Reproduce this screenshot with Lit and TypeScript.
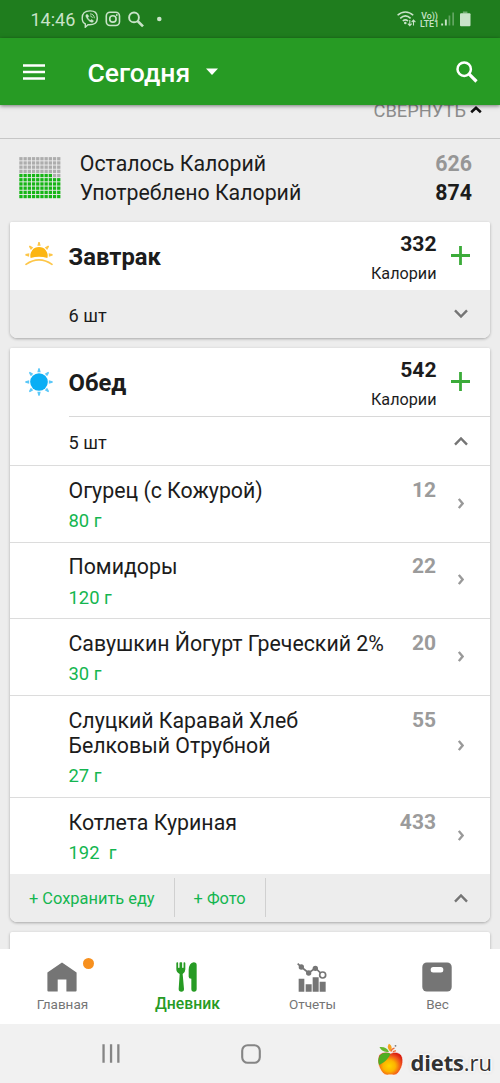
import { LitElement, html, svg, css } from "lit";
import { customElement, property } from "lit/decorators.js";
import { classMap } from "lit/directives/class-map.js";

interface Food {
  name: string;
  amount: string;
  kcal: number;
}

const FOODS: Food[] = [
  { name: "Огурец (с Кожурой)", amount: "80 г", kcal: 12 },
  { name: "Помидоры", amount: "120 г", kcal: 22 },
  { name: "Савушкин Йогурт Греческий 2%", amount: "30 г", kcal: 20 },
  { name: "Слуцкий Каравай Хлеб Белковый Отрубной", amount: "27 г", kcal: 55 },
  { name: "Котлета Куриная", amount: "192 \u00a0г", kcal: 433 },
];

const EATEN = 874;
const LEFT = 626;

const chevron = (up: boolean) => html`<svg class="chevron" width="14" height="10" viewBox="0 0 14 10" fill="none" stroke="#757575" stroke-width="2.4">
  <path d=${up ? "M1 8.6 7 2.4 13 8.6" : "M1 1.4 7 7.6 13 1.4"} />
</svg>`;

const rays = (cx: number, cy: number, angles: number[]) =>
  angles.map((a) => svg`<path transform="rotate(${a} ${cx} ${cy})" d="M${cx - 5} ${cy - 29.5}h10l-3 -11.5h-4z" />`);

const sunrise = html`<svg width="28" height="28" viewBox="75 306 84 84">
  <g fill="#fdc648">${rays(117, 347, [-86, -45, 0, 45, 86])}</g>
  <path fill="#fcb614" d="M92 354A26 26 0 1 1 142 354Q117 346 92 354z" />
  <path fill="none" stroke="#fdc648" stroke-width="5" stroke-linecap="round" d="M78 373Q117 346 156 373" />
</svg>`;

const noon = html`<svg width="28" height="28" viewBox="75 84 84 84">
  <g fill="#5cc8f8">${rays(117, 126, [0, 45, 90, 135, 180, 225, 270, 315])}</g>
  <circle cx="117" cy="126" r="26.5" fill="#0aaef5" />
</svg>`;

@customElement("calorie-grid")
class CalorieGrid extends LitElement {
  @property({ type: Number }) eaten = 0;
  @property({ type: Number }) total = 1;

  static styles = css`
    :host {
      display: block;
    }
    svg { display: block; }
    .dot { fill: #adadad; }
    .full { fill: #16b516; }
  `;

  render() {
    const filled = Math.round((this.eaten / this.total) * 100);
    return html`<svg width="42" height="42" viewBox="0 0 42 42">
      ${Array.from({ length: 100 }, (_, i) => {
        const row = Math.floor(i / 10);
        const rank = (9 - row) * 10 + (i % 10);
        return svg`<rect class=${classMap({ dot: true, full: rank < filled })} x=${(i % 10) * 4.2 + 0.3} y=${row * 4.2 + 0.1} width="3.3" height="3.3" />`;
      })}
    </svg>`;
  }
}

@customElement("meal-header")
class MealHeader extends LitElement {
  @property() name = "";
  @property({ type: Number }) kcal = 0;
  @property({ attribute: false }) icon: unknown;

  static styles = css`
    :host {
      display: grid;
      grid-template-columns: 43.5px 1fr auto 53.5px;
      align-items: center;
      height: 68px;
      padding-left: 15px;
      box-sizing: border-box;
      background: #fff;
    }
    svg { display: block; }
    .name { font-weight: 700; font-size: 23.8px; line-height: 28px; padding-top: 2px; }
    .sum { text-align: right; padding-top: 9px; }
    .kcal { font-weight: 700; font-size: 21.1px; line-height: 30px; margin-top: -4px; }
    .unit { font-size: 16.2px; line-height: 30px; }
    .plus { margin: -1px 0 0 14.5px; }
  `;

  render() {
    return html`
      ${this.icon}
      <div class="name">${this.name}</div>
      <div class="sum">
        <div class="kcal">${this.kcal}</div>
        <div class="unit">Калории</div>
      </div>
      <svg class="plus" width="19" height="19" viewBox="0 0 19 19" stroke="#3bab39" stroke-width="2.8">
        <path d="M9.5 0v19M0 9.5h19" />
      </svg>
    `;
  }
}

@customElement("app-root")
class AppRoot extends LitElement {
  static styles = css`
    :host {
      display: flex;
      flex-direction: column;
      position: relative;
      height: 100vh;
      overflow: hidden;
      background: #ededed;
      color: #1c1c1c;
      font-family: Roboto, "Liberation Sans", sans-serif;
    }
    svg { display: block; flex: none; }

    .status {
      display: flex;
      align-items: center;
      height: 38px;
      flex: none;
      padding: 0 29px 0 30.5px;
      background: #1f7d1e;
      color: #c9e3c9;
    }
    .clock { font-size: 18px; line-height: 22px; width: 50.5px; padding-top: 2px; }
    .spacer { flex: 1; }
    .volte {
      font-size: 8.8px;
      font-weight: 500;
      line-height: 8px;
      text-align: center;
      width: 19px;
      margin: 2px 2px 0 4px;
    }

    .bar {
      display: flex;
      align-items: center;
      height: 67px;
      flex: none;
      padding: 0 22.5px 0 23px;
      background: #279b24;
      color: #fff;
      box-shadow: 0 1px 4px rgba(0, 0, 0, 0.5);
      z-index: 1;
    }
    .title { font-size: 26.5px; font-weight: 500; line-height: 34px; margin: 3px 16px 0 42.5px; }

    main { flex: 1; min-height: 0; overflow: hidden; }
    .collapse {
      display: flex;
      justify-content: flex-end;
      height: 33px;
      border-bottom: 1px solid #c6c6c6;
      padding-right: 18px;
      color: #8c8c8c;
      font-size: 18.3px;
      line-height: 24px;
    }
    .collapse span { margin: -6px 4px 0 0; }
    .summary {
      display: grid;
      grid-template-columns: 61px 1fr auto;
      height: 82px;
      box-sizing: border-box;
      padding: 11px 28px 0 18.8px;
      font-size: 21.3px;
      line-height: 28.8px;
    }
    calorie-grid { margin-top: 6.5px; }
    .figures { text-align: right; font-weight: 700; }
    .left { color: #969696; }

    .card {
      margin: 1px 10px 10px;
      background: #fff;
      border-radius: 2px 2px 7px 7px;
      box-shadow: 0 1px 3px rgba(0, 0, 0, 0.3);
      overflow: hidden;
    }
    .card + .card { margin-top: 0; }
    .count {
      display: flex;
      align-items: center;
      justify-content: space-between;
      height: 48px;
      padding: 0 22px 0 58.5px;
      font-size: 18.2px;
    }
    .count span { padding-top: 3px; }
    .shade { background: #ededed; }
    .ruled { margin-left: 58.5px; padding-left: 0; border-top: 1px solid #d8d8d8; }
    .food {
      display: grid;
      grid-template-columns: 320px 1fr 54px;
      box-sizing: border-box;
      min-height: 76.7px;
      border-top: 1px solid #dcdcdc;
      padding: 11.6px 0 8.8px 58.5px;
    }
    .name { font-size: 21.32px; line-height: 25.3px; }
    .amount { font-size: 18.4px; line-height: 24px; color: #14b650; margin-top: 6px; }
    .kcal { font-size: 21px; line-height: 25.3px; font-weight: 700; color: #9b9b9b; text-align: right; }
    .food svg { align-self: center; margin: -4px 0 0 22px; }
    .wide .name { max-width: 250px; }
    .actions {
      display: flex;
      align-items: center;
      height: 48px;
      padding-right: 22px;
      color: #14b650;
      font-size: 16.4px;
      background: #ededed;
    }
    .actions span {
      display: flex;
      align-items: center;
      height: 39px;
      box-sizing: border-box;
      padding: 2px 19px 0;
      border-right: 1px solid #d0d0d0;
    }
    .actions svg { margin-left: auto; }
    .next { height: 40px; }

    nav {
      display: grid;
      grid-template-columns: repeat(4, 1fr);
      height: 75px;
      flex: none;
      background: #fff;
      color: #757575;
      z-index: 1;
    }
    .tab {
      display: flex;
      flex-direction: column;
      align-items: center;
      position: relative;
      padding-top: 13px;
      font-size: 13.5px;
      line-height: 20px;
      gap: 2px;
    }
    .tab svg { margin-left: -0.5px; }
    .active { color: #279b24; font-size: 15.8px; font-weight: 500; gap: 1px; }
    .badge {
      position: absolute;
      left: 82.5px;
      top: 8.5px;
      width: 11px;
      height: 11px;
      border-radius: 50%;
      background: #f7901e;
    }
    .system {
      display: flex;
      align-items: center;
      height: 59px;
      flex: none;
      padding-left: 101.5px;
      gap: 120px;
      background: #f1f1f1;
    }
    .mark {
      position: absolute;
      right: 8px;
      bottom: 7px;
      display: flex;
      align-items: flex-end;
      gap: 7px;
      font-family: "Open Sans", sans-serif;
      font-size: 22px;
      line-height: 28px;
      color: #333;
      text-shadow: 0 0 2px #fff, 1px 1px 2px #fff, -1px -1px 2px #fff, 1px -1px 2px #fff, -1px 1px 2px #fff, 0 0 4px #bbb;
    }
    .mark b { font-weight: 700; letter-spacing: -0.2px; }
  `;

  private statusBar() {
    return html`<div class="status">
      <div class="clock">14:46</div>
      <svg width="82" height="18" viewBox="0 0 82 18" fill="none" stroke="#c9e3c9" stroke-width="1.4">
        <path d="M9 .9C4 .9 1.2 2.8 1.2 8c0 3 .9 5 3.1 6v3.2l2.7-2.5C13 15 16.3 13.5 16.3 8S13.8.9 9 .9z" />
        <path d="M5.7 4.3c-1.3.8-1 1.9-.3 3.2 1.3 2.4 2.7 3.7 4.9 4.7.9.4 1.6.1 2.2-.9.3-.6-1.7-2.1-2.2-1.8l-.8.8C8 9.7 7.3 8.8 6.9 7.5l.8-.8c.4-.6-1.3-2.7-2-2.4z" fill="#c9e3c9" stroke-width=".4" />
        <path d="M9 3.9c2.7 0 4.3 1.6 4.3 4.3M9.2 5.9c1.4.1 2 .8 2.1 2" stroke-width=".9" />
        <rect x="25.3" y="2.3" width="13.2" height="13.2" rx="3.8" stroke-width="1.6" />
        <circle cx="31.9" cy="8.9" r="3.2" stroke-width="1.6" />
        <circle cx="35.8" cy="5" r=".9" fill="#c9e3c9" stroke="none" />
        <circle cx="53" cy="7.4" r="4.9" stroke-width="1.9" />
        <path d="m56.7 11.1 5.3 5.3" stroke-width="2.7" />
        <circle cx="78.3" cy="9" r="2.3" fill="#c9e3c9" stroke="none" />
      </svg>
      <div class="spacer"></div>
      <svg width="19" height="16" viewBox="0 0 19 16" fill="none" stroke="#c9e3c9" stroke-width="1.6">
        <path d="M.6 4.3C5.2-.2 11.6-.2 16.2 4.3M3.2 7.300c3.200-3 7.200-3 10.400 0M5.800 10c1.700-1.500 3.500-1.500 5.200 0" />
        <circle cx="8.3" cy="12" r="1.3" fill="#c9e3c9" stroke="none" />
        <path d="M12.8 9v5.500m-1.900-1.900 1.900 2 1.900-2M16.500 14.500V9.300m-1.900 1.800 1.900-2 1.900 2" stroke-width="1.1" />
      </svg>
      <div class="volte">Vo))<br />LTE1</div>
      <svg width="30" height="16" viewBox="0 0 30 16" fill="#c9e3c9">
        <path d="M.2 12.500h1.900v2H.2zM3.900 8.500h1.900v6H3.900z" />
        <path d="M7.600 4.500h1.700v10H7.600zM11.300 1.500h1.700v13h-1.700z" opacity=".4" />
        <path d="M21.900.5h4.500v2h-4.500z" opacity=".5" />
        <rect x="19" y="2.300" width="10.500" height="13" rx="1" />
      </svg>
    </div>`;
  }

  private appBar() {
    return html`<div class="bar">
      <svg width="22" height="16" viewBox="0 0 22 16" fill="#fff"><path d="M0 .3h22v2.400H0zM0 6.800h22v2.400H0zM0 13.300h22v2.400H0z" /></svg>
      <div class="title">Сегодня</div>
      <svg width="12" height="7" viewBox="0 0 12 7" fill="#fff"><path d="M0 .4h12L6 7z" /></svg>
      <div class="spacer"></div>
      <svg width="22" height="22" viewBox="0 0 22 22" fill="none" stroke="#fff"><circle cx="8.2" cy="8.2" r="6.700" stroke-width="2.500" /><path d="m12.900 12.900 7.600 7.600" stroke-width="3.200" /></svg>
    </div>`;
  }

  private foodRow(food: Food) {
    return html`<div class=${classMap({ food: true, wide: food.name.length > 30 })}>
      <div>
        <div class="name">${food.name}</div>
        <div class="amount">${food.amount}</div>
      </div>
      <div class="kcal">${food.kcal}</div>
      <svg width="6" height="11" viewBox="0 0 6 11" fill="none" stroke="#999" stroke-width="2.4"><path d="m.8.9 3.800 4.600-3.800 4.600" /></svg>
    </div>`;
  }

  private bottomNav() {
    return html`<nav>
      <div class="tab">
        <svg width="30" height="30" viewBox="0 0 30 30"><path fill="#757575" d="M15 .6 29.600 10.500V28.500a1 1 0 0 1-1 1H19.400V17.500H10.700V29.500H1.400a1 1 0 0 1-1-1V10.500z" /></svg>
        <span>Главная</span><i class="badge"></i>
      </div>
      <div class="tab active">
        <svg width="22" height="31" viewBox="530 299 66 93" fill="#279b24">
          <path d="M531 303q0-3 3-3t3 3V316h3V303q0-3 3-3h3q3 0 3 3V316h3V303q0-3 3-3t3 3V321q0 9-8 14L554 380q0 8-8 8t-8-8L541 335Q531 330 531 321z" />
          <path fill="#fff" d="M537 300h2.800v16H537zM549.200 300h2.800v16h-2.800z" />
          <path d="M583 300q9 0 9 8V380q0 8-8 8t-8-8V349q-8 0-8-6V322Q569 303 583 300z" />
        </svg>
        <span>Дневник</span>
      </div>
      <div class="tab">
        <svg width="30" height="30" viewBox="142 307 90 90" fill="#757575">
          <path d="M147 357h17v39h-17zM168 374h18v22h-18zM189 353h18v43h-18zM210 366h18v30h-18z" />
          <path d="M144 312 155 322 177 340 197 325 214 341" fill="none" stroke="#757575" stroke-width="5" />
          <circle cx="155" cy="322" r="8" /><circle cx="177" cy="340" r="8" /><circle cx="197" cy="326" r="8" />
          <circle cx="219" cy="346" r="9" fill="#fff" stroke="#757575" stroke-width="5" />
        </svg>
        <span>Отчеты</span>
      </div>
      <div class="tab">
        <svg width="30" height="30" viewBox="0 0 30 30"><rect x=".3" y=".4" width="29.400" height="29.200" rx="4.500" fill="#757575" /><rect x="8.700" y="5" width="12.600" height="5.500" rx="2.500" fill="#fff" /></svg>
        <span>Вес</span>
      </div>
    </nav>`;
  }

  private watermark() {
    return html`<div class="mark">
      <svg width="27" height="33" viewBox="0 0 27 33">
        <defs>
          <radialGradient id="skin" cx=".45" cy=".6" r=".62">
            <stop offset="0" stop-color="#ffd500" /><stop offset=".4" stop-color="#fdb400" />
            <stop offset=".75" stop-color="#f0521b" /><stop offset="1" stop-color="#d81e10" />
          </radialGradient>
        </defs>
        <path fill="url(#skin)" stroke="#fff" stroke-width=".6" d="M13.500 10.500C17 8.500 22 9 24.500 12.500c3 5 .5 14-4.500 18.500-2.500 1.700-4.500.8-6.500.8s-4 .9-6.500-.8C2 27-.5 18 2 12.500 4.500 9 10 8.500 13.500 10.500z" />
        <path fill="#4fae22" d="M13.500 10.800C10 9 5 9.500 2.500 13 1 16 1 19 2 22 6 20 11 17 13.500 10.800z" />
        <path fill="#f9a11b" d="M13.300 8.500C9.800 5 10.500 3 12 .8c3 2 3.500 4.500 1.300 7.700z" />
        <path fill="#66b82e" d="M12 8.700C7 9.500 4 7.500 2.500 4 7 3.500 10.500 5 12 8.700z" />
        <path fill="none" stroke="#ef6a32" stroke-width="1.300" d="M14 8.500c.5-2 1.500-3 3.500-3.300M16 9c1-1 2-1.300 3-1.200" />
        <circle cx="18.500" cy="2.800" r=".9" fill="#777" />
      </svg>
      <div><b>diets</b>.ru</div>
    </div>`;
  }

  render() {
    return html`
      ${this.statusBar()} ${this.appBar()}
      <main>
        <div class="collapse">
          <span>СВЕРНУТЬ</span>
          <svg width="12" height="9" viewBox="0 0 12 9" fill="none" stroke="#111" stroke-width="2.600"><path d="M1.200 7.200 6 2.800l4.800 4.400" /></svg>
        </div>
        <div class="summary">
          <calorie-grid .eaten=${EATEN} .total=${EATEN + LEFT}></calorie-grid>
          <div>Осталось Калорий<br />Употреблено Калорий</div>
          <div class="figures"><div class="left">${LEFT}</div>${EATEN}</div>
        </div>
        <section class="card">
          <meal-header name="Завтрак" kcal="332" .icon=${sunrise}></meal-header>
          <div class="count shade"><span>6 шт</span>${chevron(false)}</div>
        </section>
        <section class="card">
          <meal-header name="Обед" kcal="542" .icon=${noon}></meal-header>
          <div class="count ruled"><span>5 шт</span>${chevron(true)}</div>
          ${FOODS.map((f) => this.foodRow(f))}
          <div class="actions"><span>+ Сохранить еду</span><span>+ Фото</span>${chevron(true)}</div>
        </section>
        <section class="card next"></section>
      </main>
      ${this.bottomNav()}
      <div class="system">
        <svg width="19" height="19" viewBox="0 0 19 19" fill="#858585"><path d="M.4.300h2.300v18.400H.4zM7.900.300h2.300v18.400H7.900zM15.200.300h2.300v18.400h-2.300z" /></svg>
        <svg width="20" height="20" viewBox="0 0 20 20"><rect x="1.200" y="1.200" width="17.600" height="17.600" rx="5.500" fill="none" stroke="#858585" stroke-width="2.100" /></svg>
      </div>
      ${this.watermark()}
    `;
  }
}
